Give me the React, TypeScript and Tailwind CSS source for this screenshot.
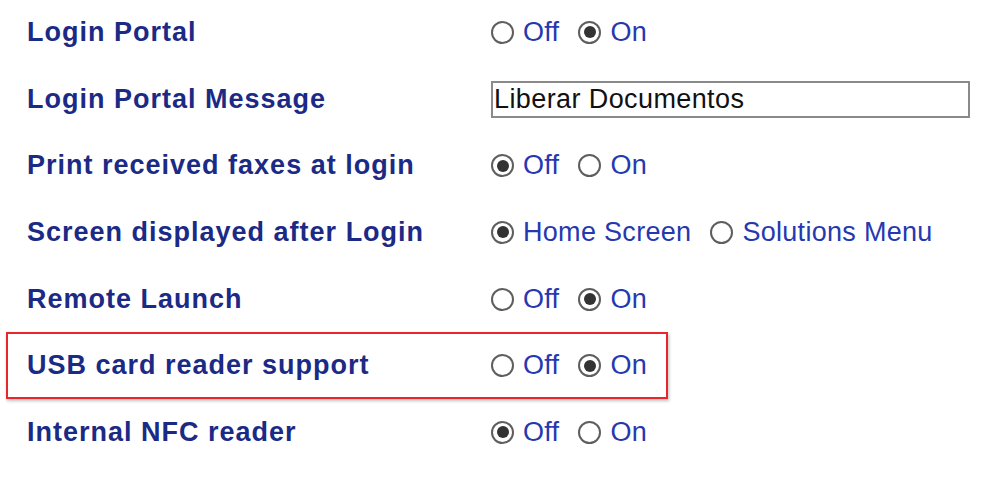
import React from "react";

type Opt = { label: string; checked: boolean };

function Radio({ checked }: { checked: boolean }) {
  return (
    <span className="flex h-[23px] w-[23px] shrink-0 items-center justify-center rounded-full border-2 border-[#5e5e5e] bg-white">
      {checked && <span className="h-[12px] w-[12px] rounded-full bg-[#333333]" />}
    </span>
  );
}

function RadioGroup({ options }: { options: Opt[] }) {
  return (
    <div className="flex items-center gap-[19px]">
      {options.map((o) => (
        <div key={o.label} className="flex items-center gap-[9px]">
          <Radio checked={o.checked} />
          <span className="tracking-[0.3px] text-[#2638b0]">{o.label}</span>
        </div>
      ))}
    </div>
  );
}

const offOn = (on: boolean): Opt[] => [
  { label: "Off", checked: !on },
  { label: "On", checked: on },
];

function Row({ label, children, boxed }: { label: string; children: React.ReactNode; boxed?: boolean }) {
  return (
    <div
      className={
        boxed
          ? "ml-[6px] flex h-[66.7px] w-[662px] items-center border-2 border-[#e8262b] pl-[19px] shadow-[1px_2px_3px_rgba(0,0,0,0.25)]"
          : "flex h-[66.7px] items-center pl-[27px]"
      }
    >
      <div className="w-[464px] shrink-0 font-bold tracking-[1px] text-[#1b2a85]">{label}</div>
      {children}
    </div>
  );
}

export default function App() {
  return (
    <div className="h-[486px] w-[1000px] overflow-hidden bg-white text-[27px] leading-none [font-family:'Liberation_Sans',Arial,sans-serif]">
      <div className="-mt-[1px]">
        <Row label="Login Portal">
          <RadioGroup options={offOn(true)} />
        </Row>
        <Row label="Login Portal Message">
          <div className="flex h-[37px] w-[479px] items-center border-2 border-[#8a8a8a] pl-[1px] tracking-[0.4px] text-[#111]">
            Liberar Documentos
          </div>
        </Row>
        <Row label="Print received faxes at login">
          <RadioGroup options={offOn(false)} />
        </Row>
        <Row label="Screen displayed after Login">
          <RadioGroup
            options={[
              { label: "Home Screen", checked: true },
              { label: "Solutions Menu", checked: false },
            ]}
          />
        </Row>
        <Row label="Remote Launch">
          <RadioGroup options={offOn(true)} />
        </Row>
        <Row label="USB card reader support" boxed>
          <RadioGroup options={offOn(true)} />
        </Row>
        <Row label="Internal NFC reader">
          <RadioGroup options={offOn(false)} />
        </Row>
      </div>
    </div>
  );
}
